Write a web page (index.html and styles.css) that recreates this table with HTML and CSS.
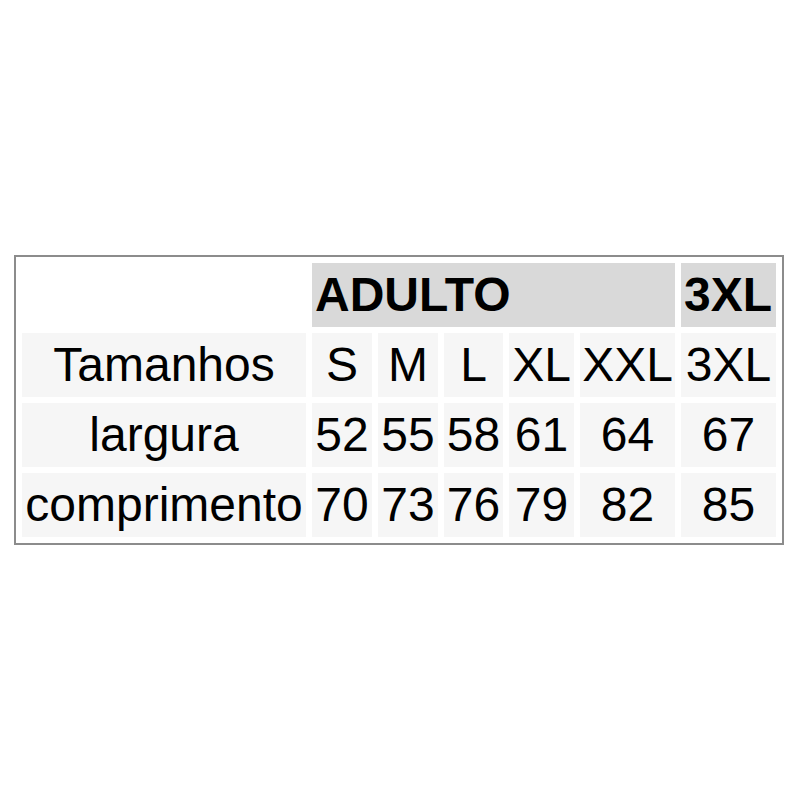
FILE: index.html
```html
<!DOCTYPE html>
<html>
<head>
<meta charset="utf-8">
<link rel="stylesheet" href="styles.css">
</head>
<body>
<table class="sizes">
  <colgroup>
    <col class="c-label">
    <col class="c-s"><col class="c-m"><col class="c-l"><col class="c-xl"><col class="c-xxl"><col class="c-3xl">
  </colgroup>
  <tr class="head">
    <td class="blank"></td>
    <th colspan="5">ADULTO</th>
    <th>3XL</th>
  </tr>
  <tr>
    <td>Tamanhos</td><td>S</td><td>M</td><td>L</td><td>XL</td><td>XXL</td><td>3XL</td>
  </tr>
  <tr>
    <td>largura</td><td>52</td><td>55</td><td>58</td><td>61</td><td>64</td><td>67</td>
  </tr>
  <tr>
    <td>comprimento</td><td>70</td><td>73</td><td>76</td><td>79</td><td>82</td><td>85</td>
  </tr>
</table>
</body>
</html>
```
FILE: styles.css
```css
html, body {
  margin: 0;
  padding: 0;
  background: #ffffff;
}
body {
  padding: 255px 0 0 14px;
  font-family: "Liberation Sans", Arial, sans-serif;
  color: #000;
}
.sizes {
  border: 2px solid #8c8c8c;
  border-spacing: 6px;
  table-layout: fixed;
  width: 769px;
  font-size: 48px;
}
.c-label { width: 284px; }
.c-s { width: 60px; }
.c-m { width: 60px; }
.c-l { width: 59px; }
.c-xl { width: 65px; }
.c-xxl { width: 95px; }
.c-3xl { width: 95px; }
.sizes td, .sizes th {
  height: 64px;
  padding: 0;
  text-align: center;
  vertical-align: middle;
  background: #f6f6f6;
  white-space: nowrap;
  overflow: visible;
  line-height: 1;
}
.sizes .head th {
  background: #d9d9d9;
  text-align: left;
  padding-left: 3px;
  font-weight: bold;
}
.sizes .head td.blank {
  background: transparent;
}
```
